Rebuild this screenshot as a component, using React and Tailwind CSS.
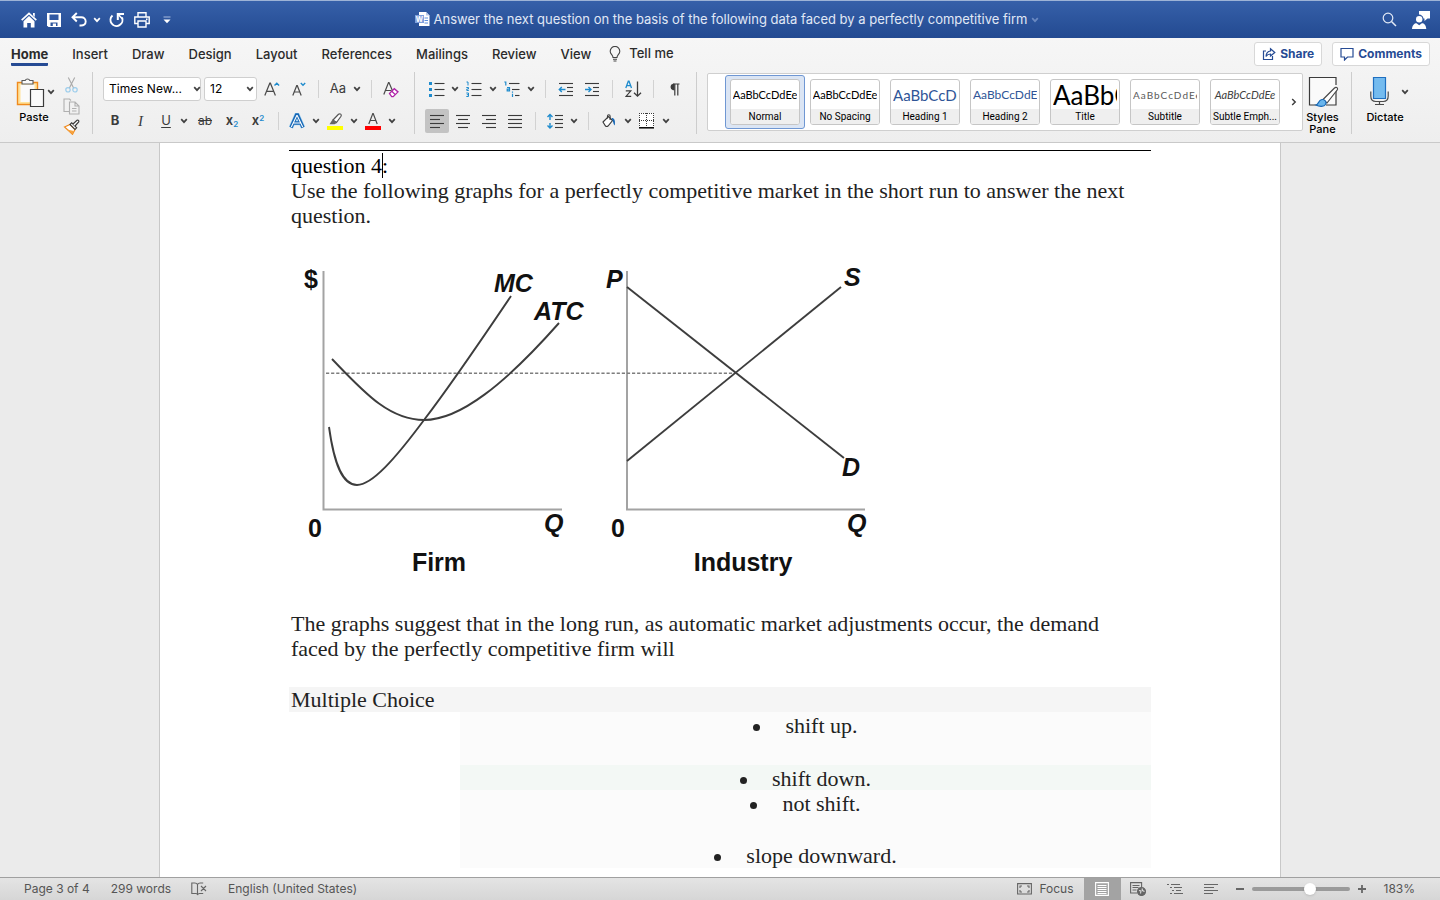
import React from 'react';

const TABS = ['Home', 'Insert', 'Draw', 'Design', 'Layout', 'References', 'Mailings', 'Review', 'View'];

const STYLES = [
  { name: 'Normal', preview: 'text-[11px] text-black', center: true },
  { name: 'No Spacing', preview: 'text-[11px] text-black', center: true },
  { name: 'Heading 1', preview: 'text-[15px] text-[#2f5597]' },
  { name: 'Heading 2', preview: 'text-[12px] text-[#2f5597]' },
  { name: 'Title', preview: 'text-[26px] text-black' },
  { name: 'Subtitle', preview: 'text-[10px] tracking-widest text-[#5a5a5a]' },
  { name: 'Subtle Emph...', preview: 'text-[11px] italic text-[#404040]', center: true },
];

const CHOICES = [
  { text: 'shift up.', row: 'h-[53px]' },
  { text: 'shift down.', row: 'h-[25px] bg-[#f3f8f5]' },
  { text: 'not shift.', row: 'h-[52px]' },
  { text: 'slope downward.', row: 'h-[26px]' },
];

const Chevron = ({ className = 'text-[#404040]' }) => (
  <svg width="8" height="6" viewBox="0 0 8 6" fill="none" className={className}>
    <path d="M1.2 1.2 4 4.2 6.8 1.2" stroke="currentColor" strokeWidth="1.7" />
  </svg>
);

const Tool = ({ label, w = 'w-6', h = 'h-6', className = '', children }) => (
  <button
    type="button"
    aria-label={label}
    className={`flex shrink-0 items-center justify-center ${h} ${w} ${className}`}
  >
    {children}
  </button>
);

const More = ({ label }) => (
  <Tool label={label} w="w-3">
    <Chevron />
  </Tool>
);

const Sep = ({ w = 'w-3' }) => (
  <div className={`flex shrink-0 justify-center ${w}`}>
    <div className="h-[18px] w-px bg-[#d2d2d2]" />
  </div>
);

const GroupLine = () => <div className="h-[62px] w-px shrink-0 bg-[#cdcdcd]" />;

const Picker = ({ label, value, w }) => (
  <div className="relative">
    <select
      aria-label={label}
      className={`block h-6 appearance-none rounded-[3px] border border-[#cfcfcf] bg-white pl-[5px] text-[12px] text-black ${w}`}
    >
      <option>{value}</option>
    </select>
    <span className="pointer-events-none absolute inset-y-0 right-[3px] flex items-center">
      <Chevron />
    </span>
  </div>
);

// Horizontal strokes used by the list and alignment icons: [x1, x2, y]
const Lines = ({ rows, children, w = 16, h = 16 }) => (
  <svg width={w} height={h} viewBox={`0 0 ${w} ${h}`} fill="none">
    {rows.map(([x1, x2, y]) => (
      <path key={y} d={`M${x1} ${y}H${x2}`} stroke="#3b3b3b" strokeWidth="1.1" />
    ))}
    {children}
  </svg>
);

const TitleBar = () => (
  <header className="flex h-[38px] shrink-0 items-center border-t border-[#9db3d6] bg-gradient-to-b from-[#3660a9] to-[#234a91] text-white">
    <div className="flex flex-1 items-center pl-[17px]">
      <Tool label="Home">
        <svg width="16" height="16" viewBox="0 0 16 16" fill="none">
          <path d="M.7 8.2 8 1.3l7.3 6.9" stroke="#fff" strokeWidth="1.7" />
          <path d="M12 1h1.800v4L12 3.3z" fill="#fff" />
          <path d="M2.500 9.200 8 4l5.500 5.200V15.500H9.800V11H6.200v4.500H2.500z" fill="#fff" />
        </svg>
      </Tool>
      <Tool label="Save" w="w-[26px]">
        <svg width="14" height="14" viewBox="0 0 14 14" fill="none">
          <path d="M0 0h14v14H1.500L0 12.500z" fill="#fff" />
          <path d="M2.500 1.500h9v5.500h-9z" fill="#3059a3" />
          <path d="M3.500 9.500h7V13h-7z" fill="#2c559d" />
          <path d="M5.800 10.500H9V13H5.800z" fill="#fff" />
        </svg>
      </Tool>
      <Tool label="Undo">
        <svg width="16" height="15" viewBox="0 0 16 15" fill="none">
          <path d="M5.800 1 1.500 5.200l4.300 4.300M2 5.200h8.200c2.600 0 4.500 1.800 4.500 4.300S12.800 13.500 10 13.500H8.500" stroke="#fff" strokeWidth="1.900" />
        </svg>
      </Tool>
      <Tool label="Undo history" w="w-3">
        <Chevron className="text-white" />
      </Tool>
      <Tool label="Redo" w="w-7">
        <svg width="16" height="16" viewBox="0 0 16 16" fill="none">
          <path d="M3.500 3.500A6 6 0 1 0 13 5.500" stroke="#fff" strokeWidth="2" />
          <path d="M8.800 8V2H15" stroke="#fff" strokeWidth="2" />
          <path d="M9 2.200 13 6.500" stroke="#fff" strokeWidth="1.500" />
        </svg>
      </Tool>
      <Tool label="Print" w="w-[22px]">
        <svg width="16" height="16" viewBox="0 0 16 16" fill="none" stroke="#fff" strokeWidth="1.400">
          <path d="M4 5V.8h8V5M4 11.500H.8V5h14.400v6.500H12" />
          <path d="M4 9h8v6H4z" />
          <path d="M12 7.200h1.500" />
        </svg>
      </Tool>
      <Tool label="Customize toolbar" w="w-7">
        <svg width="8" height="8" viewBox="0 0 8 8">
          <path d="M.5 1h7" stroke="#a9bcdf" />
          <path d="M.5 3.500h7L4 7.200z" fill="#fff" />
        </svg>
      </Tool>
    </div>

    <div className="flex items-center text-[13px] text-[#e0e8f6]">
      <svg width="15" height="15" viewBox="0 0 15 15" className="mr-1">
        <path d="M4 0h7l3.500 3.500V14H4z" fill="#fff" />
        <path d="M11 0v3.500h3.500" fill="#b9c9e8" />
        <path d="M9.500 6h3.500M9.500 8.500h3.500M9.500 11h3.500" stroke="#5b8ede" />
        <path d="M0 3h9v8H0z" fill="#7fa0dc" />
        <text x="4.500" y="9.500" textAnchor="middle" fontSize="7" fontWeight="700" fill="#fff">W</text>
      </svg>
      <h1 className="whitespace-nowrap">
        Answer the next question on the basis of the following data faced by a perfectly competitive firm
      </h1>
      <Chevron className="ml-1 text-[#6b8ac2]" />
    </div>

    <div className="flex flex-1 items-center justify-end pr-[3px]">
      <Tool label="Search" w="w-8">
        <svg width="15" height="15" viewBox="0 0 15 15" fill="none" stroke="#e3eaf6" strokeWidth="1.200">
          <circle cx="6" cy="6" r="4.800" />
          <path d="m9.500 9.500 4.500 4.500" strokeWidth="1.500" />
        </svg>
      </Tool>
      <Tool label="Account" w="w-8">
        <svg width="18" height="18" viewBox="0 0 18 18" fill="#fff">
          <path d="M7 0h11v7.500h-2.500L12.500 10V7.500h-1A5 5 0 0 0 7 3.500z" />
          <circle cx="7.200" cy="8.200" r="3.200" />
          <path d="M0 18c.2-4 2.500-5.800 4.500-5.800l2.700 2 2.700-2c2.200 0 4.200 1.800 4.400 5.800z" />
        </svg>
      </Tool>
    </div>
  </header>
);

const TabBar = () => (
  <nav className="flex h-8 shrink-0 items-center pr-2.5 pl-[11px] text-[13px] font-medium text-[#2b2b2b]">
    <div className="flex flex-1 items-center gap-6">
      {TABS.map((tab, i) => (
        <button
          key={tab}
          type="button"
          className={`h-6 border-y-[3px] border-t-transparent ${
            i === 0 ? 'rounded-[1px] border-b-[#264b94] font-bold' : 'border-b-transparent'
          }`}
        >
          <span className="block leading-[18px]">{tab}</span>
        </button>
      ))}
      <button type="button" className="-ml-1.5 flex items-center gap-2">
        <svg width="12" height="16" viewBox="0 0 12 16" fill="none" stroke="#444" strokeWidth="1.100">
          <path d="M4 11.500C4 9 1.200 8.300 1.200 5.200a4.800 4.800 0 0 1 9.600 0C10.800 8.300 8 9 8 11.500zM4 13.300h4M4.500 15h3" />
        </svg>
        Tell me
      </button>
    </div>
    <div className="flex gap-2.5 text-[12px] font-bold text-[#264b94]">
      <button type="button" className="flex h-6 items-center gap-1 rounded-[3px] border border-[#d8d8d8] bg-white px-[7px]">
        <svg width="14" height="14" viewBox="0 0 14 14" fill="none" stroke="#264b94" strokeWidth="1.200">
          <path d="M4 4H1.500v8.500h9V9" />
          <path d="M8.500 1.800 12.800 5.500 8.500 9V7C6.500 7 5 7.800 4 9.500c.2-3.200 2-5.200 4.500-5.500z" />
        </svg>
        Share
      </button>
      <button type="button" className="flex h-6 items-center gap-1 rounded-[3px] border border-[#d8d8d8] bg-white px-[7px]">
        <svg width="14" height="14" viewBox="0 0 14 14" fill="none" stroke="#264b94" strokeWidth="1.200">
          <path d="M1 1.500h12v8.500H7.500L4.500 13v-3H1z" />
        </svg>
        Comments
      </button>
    </div>
  </nav>
);

const ClipboardGroup = () => (
  <div className="flex w-[92px] shrink-0 pt-1.5 pl-[15px]">
    <div className="w-[42px]">
      <div className="flex items-center">
        <button type="button" aria-label="Paste" className="shrink-0">
          <svg width="30" height="32" viewBox="0 0 30 32" fill="none">
            <path d="M2.500 6.500h20V28.500h-20z" fill="#ffe29a" stroke="#f08a1d" strokeWidth="1.400" />
            <path d="M5.500 8.500h14v17.500h-14z" fill="#fafafa" />
            <path d="M7 8V4.500h3.200a2.500 2.500 0 0 1 4.600 0H18V8z" fill="#fafafa" stroke="#5a5a5a" strokeWidth="1.100" />
            <path d="M15.500 13.500h13v17h-13z" fill="#fafafa" stroke="#3b3b3b" strokeWidth="1.200" />
          </svg>
        </button>
        <More label="Paste options" />
      </div>
      <span className="mt-0.5 block w-[38px] text-center text-[11px] leading-[14px] font-medium text-black">Paste</span>
    </div>
    <div className="flex flex-col items-center pl-0.5">
      <Tool label="Cut" h="h-[18px]">
        <svg width="13" height="16" viewBox="0 0 13 16" fill="none">
          <path d="M3.300.500 8.600 11M9.700.500 4.400 11" stroke="#a9a9a9" strokeWidth="1.100" />
          <circle cx="3" cy="12.800" r="2.200" stroke="#9ccdec" strokeWidth="1.200" />
          <circle cx="10" cy="12.800" r="2.200" stroke="#9ccdec" strokeWidth="1.200" />
        </svg>
      </Tool>
      <Tool label="Copy">
        <svg width="17" height="17" viewBox="0 0 17 17" fill="none" stroke="#b0b0b0" strokeWidth="1.100">
          <path d="M6.500 13.500H1V1h5.500L8 2.500" />
          <path d="M6.500 4h5.500L16 8v8H6.500zM12 4v4h4M9 10.500h4.500M9 13h4.500" />
        </svg>
      </Tool>
      <Tool label="Format painter" h="h-[18px]">
        <svg width="17" height="16" viewBox="0 0 17 16" fill="none">
          <path d="M1.500 8 7 5.500l5 5-2.500 4.800z" fill="#fff" stroke="#f08a1d" strokeWidth="1.200" />
          <path d="M4 10.500 11 12l-1.500 3.300z" fill="#f7a440" />
          <path d="m7 5.500 1.700-1.700 5 5L12 10.500z" fill="#fff" stroke="#3b3b3b" strokeWidth="1.100" />
          <path d="M10 5 14 1.200c1.300-.5 2.200.5 1.700 1.700L12 7" fill="#fff" stroke="#3b3b3b" strokeWidth="1.200" />
        </svg>
      </Tool>
    </div>
  </div>
);

const FontGroup = () => (
  <div className="mr-[19px] ml-2.5 w-[292px] shrink-0 pt-[7px] text-[#3b3b3b]">
    <div className="flex h-6 items-center">
      <Picker label="Font" value="Times New..." w="mr-[3px] w-[98px]" />
      <Picker label="Font size" value="12" w="w-[53px]" />
      <Tool label="Increase font size" w="w-[30px]">
        <svg width="16" height="16" viewBox="0 0 16 16" fill="none">
          <path d="M.8 14.500 5.800 2.200h.6l5 12.300M2.600 10.300h7" stroke="#4a4a4a" strokeWidth="1.200" />
          <path d="m10.500 4.500 2.300-2.300 2.300 2.300" stroke="#1e8bcd" strokeWidth="1.400" />
        </svg>
      </Tool>
      <Tool label="Decrease font size">
        <svg width="14" height="16" viewBox="0 0 14 16" fill="none">
          <path d="M.8 14.500 4.700 4.700h.6l3.900 9.800M2.200 11h5.600" stroke="#4a4a4a" strokeWidth="1.200" />
          <path d="m8.800 2 2.200 2.200L13.200 2" stroke="#1e8bcd" strokeWidth="1.400" />
        </svg>
      </Tool>
      <Sep w="w-3.5" />
      <Tool label="Change case" w="w-[26px]" className="text-[13px]">Aa</Tool>
      <More label="Case options" />
      <Sep w="w-4" />
      <Tool label="Clear formatting">
        <svg width="16" height="17" viewBox="0 0 16 17" fill="none">
          <path d="M.8 13.500 5.500 1.500H6l4 9.500M2.300 9.500h6" stroke="#4a4a4a" strokeWidth="1.200" />
          <path d="m6.500 12.500 4.800-4.800 3.700 3.200-4.800 4.800h-1.500z" fill="#fff" stroke="#b022a8" strokeWidth="1.300" />
          <path d="m8.800 10.300 3.500 3.300" stroke="#b022a8" strokeWidth="1.300" />
        </svg>
      </Tool>
    </div>

    <div className="mt-2 flex h-6 items-center">
      <Tool label="Bold" className="text-[13px] font-bold">B</Tool>
      <Tool label="Italic" w="w-[27px]" className="font-['Liberation_Serif',serif] text-[15px] italic">I</Tool>
      <Tool label="Underline" className="text-[13px] underline underline-offset-2">U</Tool>
      <More label="Underline options" />
      <Tool label="Strikethrough" w="w-[30px]" className="text-[12px] line-through">ab</Tool>
      <Tool label="Subscript" className="text-[13px] font-semibold">
        <span>x<sub className="text-[8px] text-[#1e8bcd]">2</sub></span>
      </Tool>
      <Tool label="Superscript" w="w-7" className="text-[13px] font-semibold">
        <span>x<sup className="text-[8px] text-[#1e8bcd]">2</sup></span>
      </Tool>
      <Sep />
      <Tool label="Text effects" w="w-[26px]">
        <svg width="16" height="16" viewBox="0 0 16 16" fill="none">
          <path d="M2 14.500 7.500 2h1L14 14.500M4.500 10h7" stroke="#a5d5f5" strokeWidth="4.600" />
          <path d="M2 14.500 7.500 2h1L14 14.500M4.500 10h7" stroke="#1767b5" strokeWidth="3.400" />
          <path d="M2.300 14 7.800 2.500h.4L13.700 14M4.500 10h7" stroke="#fff" strokeWidth="1.100" />
        </svg>
      </Tool>
      <More label="Text effect options" />
      <Tool label="Highlight" w="w-[26px]">
        <svg width="16" height="18" viewBox="0 0 16 18" fill="none">
          <path d="m6 8 5.500-5.700c1.500-1.300 3.500.2 2.500 2L9.500 10.500z" fill="#fff" stroke="#555" strokeWidth="1.200" />
          <path d="m5.500 7.500 4.300 3.500-2.300 1.200H2.500z" fill="#666" />
          <path d="M0 14h16v4H0z" fill="#ffff00" />
        </svg>
      </Tool>
      <More label="Highlight colors" />
      <Tool label="Font color" w="w-[26px]">
        <svg width="16" height="18" viewBox="0 0 16 18" fill="none">
          <path d="M3.800 12 7.800 1.500h.4L12.200 12M5.300 8.500h5.400" stroke="#4a4a4a" strokeWidth="1.200" />
          <path d="M0 14h16v4H0z" fill="#ff0000" />
        </svg>
      </Tool>
      <More label="Font colors" />
    </div>
  </div>
);

const ParagraphGroup = () => (
  <div className="mr-1.5 ml-2.5 w-[265px] shrink-0 pt-[7px] text-[#3b3b3b]">
    <div className="flex h-6 items-center">
      <Tool label="Bullets">
        <Lines rows={[[5.5, 15.5, 2.5], [5.5, 15.5, 8.5], [5.5, 15.5, 14.5]]}>
          <path d="M0 1h3v3H0zM0 7h3v3H0zM0 13h3v3H0z" fill="#1e8bcd" />
        </Lines>
      </Tool>
      <More label="Bullet options" />
      <Tool label="Numbering" w="w-[26px]">
        <Lines rows={[[5.5, 15.5, 2.5], [5.5, 15.5, 8.5], [5.5, 15.5, 14.5]]}>
          <g stroke="#1e8bcd" strokeWidth="1">
            <path d="M.5 1h1.500v3.500" />
            <path d="M.3 6.500h2.200v1.500H.8v1.500h2" />
            <path d="M.3 12h2.200v3.500H.3M.8 13.700h1.700" />
          </g>
        </Lines>
      </Tool>
      <More label="Numbering options" />
      <Tool label="Multilevel list" w="w-[26px]">
        <Lines rows={[[5, 15.5, 2.5], [8, 15.5, 8.5], [11, 15.5, 14.5]]}>
          <g stroke="#1e8bcd" strokeWidth="1.200">
            <path d="M.3 1h1.500v3.500" />
            <path d="M3 6.500h2.500v3.300H3.200V8.200h2.300" />
            <path d="M8.500 12.700V16M8.500 10.500v1.200" />
          </g>
        </Lines>
      </Tool>
      <More label="Multilevel options" />
      <Sep w="w-4" />
      <Tool label="Decrease indent" w="w-[26px]">
        <Lines rows={[[1, 15, 1.5], [9, 15, 5.5], [9, 15, 9.5], [1, 15, 13.5]]} h={15}>
          <path d="M7.500 7.500h-6M3.800 5 1.300 7.500 3.800 10" stroke="#1e8bcd" strokeWidth="1.400" />
        </Lines>
      </Tool>
      <Tool label="Increase indent" w="w-[26px]">
        <Lines rows={[[1, 15, 1.5], [9, 15, 5.5], [9, 15, 9.5], [1, 15, 13.5]]} h={15}>
          <path d="M1 7.500h6M4.500 5 7 7.500 4.500 10" stroke="#1e8bcd" strokeWidth="1.400" />
        </Lines>
      </Tool>
      <Sep w="w-3.5" />
      <Tool label="Sort" w="w-7">
        <svg width="17" height="18" viewBox="0 0 17 18" fill="none">
          <path d="M.8 8 3.300 1.200h.7L6.500 8M1.700 5.700h4" stroke="#1e8bcd" strokeWidth="1.300" />
          <path d="M.8 10.800h5L1 16.400h5.200" stroke="#3b3b3b" strokeWidth="1.200" />
          <path d="M12.500 1.500V16M9 12.700l3.500 3.500 3.500-3.500" stroke="#3b3b3b" strokeWidth="1.300" />
        </svg>
      </Tool>
      <Sep />
      <Tool label="Show formatting marks" w="w-[30px]">
        <svg width="11" height="13" viewBox="0 0 11 13" fill="none">
          <path d="M5.500 7.200H4A3.300 3.300 0 0 1 4 .8h1.500z" fill="#3b3b3b" />
          <path d="M4 1h6.500M5.800 1v11.500M8.800 1v11.500" stroke="#3b3b3b" strokeWidth="1.200" />
        </svg>
      </Tool>
    </div>

    <div className="mt-2 flex h-6 items-center">
      <Tool label="Align left" className="rounded-[2px] bg-[#c3c3c3]">
        <Lines rows={[[1, 15, 2.5], [1, 11, 6.5], [1, 15, 10.5], [1, 11, 14.5]]} />
      </Tool>
      <Tool label="Center" w="w-7">
        <Lines rows={[[1, 15, 2.5], [3, 13, 6.5], [1, 15, 10.5], [3, 13, 14.5]]} />
      </Tool>
      <Tool label="Align right">
        <Lines rows={[[1, 15, 2.5], [5, 15, 6.5], [1, 15, 10.5], [5, 15, 14.5]]} />
      </Tool>
      <Tool label="Justify" w="w-7">
        <Lines rows={[[1, 15, 2.5], [1, 15, 6.5], [1, 15, 10.5], [1, 15, 14.5]]} />
      </Tool>
      <Sep />
      <Tool label="Line spacing" w="w-[27px]">
        <Lines rows={[[8, 16, 2.5], [8, 16, 6.5], [8, 16, 10.5], [8, 16, 14.5]]}>
          <path d="M3 2v5M.5 4 3 1.500 5.500 4M3 10v5M.5 12.500 3 15l2.500-2.500" stroke="#1e8bcd" strokeWidth="1.400" />
        </Lines>
      </Tool>
      <More label="Spacing options" />
      <Sep w="w-4" />
      <Tool label="Shading" w="w-[26px]">
        <svg width="14" height="14" viewBox="0 0 14 14" fill="none">
          <path d="M1 8 6.500 2.500l4 4-4.500 5.500c-1 .8-1.800.5-2.500 0z" fill="#fff" stroke="#3b3b3b" strokeWidth="1.100" />
          <path d="M5.500 4.500V2a1.300 1.300 0 0 1 2.600 0v4" stroke="#3b3b3b" strokeWidth="1.100" />
          <path d="M9.500 4c3 0 4 2.500 3.300 7.500-1.500-1-1.300-3-2-4.500z" fill="#1767b5" />
        </svg>
      </Tool>
      <More label="Shading colors" />
      <Tool label="Borders" w="w-[26px]">
        <svg width="16" height="16" viewBox="0 0 16 16" fill="none">
          <path d="M0 0h15v14H0z" fill="#fff" />
          <path d="M0 .5h15M0 7.500h15M.5 0v14M7.500 0v14M14.500 0v14" stroke="#3b3b3b" strokeDasharray="1 1" />
          <path d="M0 14.800h15" stroke="#000" strokeWidth="1.500" />
        </svg>
      </Tool>
      <More label="Border options" />
    </div>
  </div>
);

const StyleGallery = () => (
  <div className="mt-[3px] ml-2.5 flex h-[58px] min-w-0 flex-1 items-center overflow-hidden rounded-[2px] border border-[#cfcfcf] bg-white pl-[17px]">
    {STYLES.map((s, i) => (
      <button
        key={s.name}
        type="button"
        className={`flex h-[54px] w-20 shrink-0 items-center justify-center rounded-[3px] border ${
          i === 0 ? 'border-[#6f97d3] bg-[#dbe5f4]' : 'border-transparent'
        }`}
      >
        <span className="flex h-[46px] w-[70px] flex-col overflow-hidden rounded-[3px] border border-[#c6c6c6] bg-white">
          <span
            className={`mx-0.5 flex h-[30px] items-center overflow-hidden font-[Lato,sans-serif] leading-[30px] ${
              s.center ? 'justify-center' : ''
            } ${s.preview}`}
          >
            AaBbCcDdEe
          </span>
          <span className="flex-1 bg-[#efefef] text-center font-[Roboto,sans-serif] text-[10px] leading-[15px] whitespace-nowrap text-black">
            {s.name}
          </span>
        </span>
      </button>
    ))}
    <button type="button" aria-label="More styles" className="flex flex-1 justify-center">
      <svg width="6" height="8" viewBox="0 0 6 8" fill="none">
        <path d="m1.200 1 3 3-3 3" stroke="#404040" strokeWidth="1.500" />
      </svg>
    </button>
  </div>
);

const Ribbon = () => (
  <div className="flex h-[73px] shrink-0 border-b border-[#c9c9c9]">
    <ClipboardGroup />
    <div className="pt-0.5"><GroupLine /></div>
    <FontGroup />
    <div className="pt-0.5"><GroupLine /></div>
    <ParagraphGroup />
    <div className="pt-0.5"><GroupLine /></div>
    <StyleGallery />
    <button type="button" className="flex w-[39px] shrink-0 flex-col items-center pt-1.5 text-[11px] leading-3 font-medium text-black">
      <svg width="32" height="32" viewBox="0 0 32 32" fill="none">
        <path d="M29 12V29H19M10 29H2.500V1.500H29V9" fill="#fafafa" stroke="#3b3b3b" strokeWidth="1.200" />
        <path d="M16 23.500 27.500 12c1.500-1.300 3.500-.5 3 1.500L20 27z" fill="#fff" stroke="#4a4a4a" strokeWidth="1.200" />
        <path d="M9 29c3-.5 2-5 6-5.500 3-.2 5 2.500 3.500 5-1.500 2.300-6 2.500-9.500.5z" fill="#69b5ec" stroke="#1767b5" strokeWidth="1.200" />
      </svg>
      <span className="mt-[3px]">Styles</span>
      <span>Pane</span>
    </button>
    <div className="pt-0.5 pl-[9px]"><GroupLine /></div>
    <div className="w-[88px] shrink-0 pt-1.5 pl-[13px] text-[11px] font-medium text-black">
      <div className="flex items-center">
        <button type="button" aria-label="Dictate" className="flex w-[30px] justify-center">
          <svg width="20" height="32" viewBox="0 0 20 32" fill="none">
            <path d="M3.500 1.500h12v21h-12z" fill="#74bbef" stroke="#1f6fc0" strokeWidth="1.200" />
            <path d="M.8 15.500V20c0 3.500 2 5.500 5 5.500h7.400c3 0 5-2 5-5.500v-4.500M9.500 25.500v3M5 28.500h9" stroke="#4a4a4a" strokeWidth="1.200" />
          </svg>
        </button>
        <span className="pl-1"><More label="Dictate options" /></span>
      </div>
      <span className="mt-0.5 block w-10 text-center leading-[14px]">Dictate</span>
    </div>
  </div>
);

const Graphs = () => (
  <svg width="600" height="383" viewBox="289 228 600 383" fill="none" className="block">
    <g stroke="#a3a3a3" strokeWidth="2">
      <path d="M323.500 271V509.500H562" />
      <path d="M627 271V509.500H865" />
    </g>
    <path d="M326 373.300H735" stroke="#7d7d7d" strokeWidth="1.400" strokeDasharray="3.200 1.900" />
    <g stroke="#3d3d3d" strokeWidth="1.900">
      <path d="M329 427C334 463 342 485 357 485c15 0 38-26 67-65 26-34 56-78 87-124" />
      <path d="M332 359c30 31 56 61 92 61 36 0 81-36 135-97" />
      <path d="M627 287 844 458" />
      <path d="M627 461 841 287" />
    </g>
    <g fill="#111" fontFamily="Liberation Sans, Arial, sans-serif" fontSize="25" fontWeight="700">
      <text x="304" y="288">$</text>
      <text x="308" y="537">0</text>
      <text x="611" y="537">0</text>
      <text x="439" y="571" textAnchor="middle">Firm</text>
      <text x="743" y="571" textAnchor="middle">Industry</text>
      <g fontStyle="italic">
        <text x="494" y="292">MC</text>
        <text x="534" y="320">ATC</text>
        <text x="606" y="288">P</text>
        <text x="844" y="286">S</text>
        <text x="842" y="476">D</text>
        <text x="544" y="532">Q</text>
        <text x="847" y="532">Q</text>
      </g>
    </g>
  </svg>
);

const Document = () => (
  <main className="min-h-0 flex-1 overflow-hidden bg-[#ebebeb]">
    <article className="mx-auto h-full max-w-[1122px] border-x border-[#c8c8c8] bg-white px-[129px] pt-[7px] font-['Liberation_Serif',serif] text-[22px] leading-[25px] text-[#222]">
      <div className="border-t border-black pt-0.5">
        <p className="pl-0.5 text-black">
          question 4<span className="absolute h-[25px] w-px bg-black" />:
        </p>
        <p className="pl-0.5">
          Use the following graphs for a perfectly competitive market in the short run to answer the next question.
        </p>
      </div>
      <Graphs />
      <p className="pl-0.5">
        The graphs suggest that in the long run, as automatic market adjustments occur, the demand faced by the
        perfectly competitive firm will
      </p>
      <h2 className="mt-[26px] bg-[#f5f5f5] pl-0.5">Multiple Choice</h2>
      <ul className="ml-[171px] bg-[#fbfbfb] leading-[27px]">
        {CHOICES.map((choice) => (
          <li key={choice.text} className={`flex items-start justify-center gap-[25px] ${choice.row}`}>
            <span className="mt-3 size-[7px] rounded-full bg-[#222]" />
            {choice.text}
          </li>
        ))}
      </ul>
    </article>
  </main>
);

const StatusBar = () => (
  <footer className="flex h-[23px] shrink-0 items-center border-t border-[#a0a0a0] bg-gradient-to-b from-[#e4e4e4] to-[#d6d6d6] pr-[25px] pl-6 text-[12px] text-[#555]">
    <span className="mr-[21px]">Page 3 of 4</span>
    <span className="mr-5">299 words</span>
    <button type="button" aria-label="Proofing" className="mr-[21px]">
      <svg width="16" height="14" viewBox="0 0 16 14" fill="none" stroke="#666" strokeWidth="1.100">
        <path d="M6.500 13V2.500C6 1.500 5 1 3.800 1H.8v10.500H5c1 0 1.500.5 1.500 1.500.3-1 .8-1.500 2-1.500h3.700M6.500 2.500C7 1.500 8 1 9.200 1h3M10 4l5 5M15 4l-5 5" />
      </svg>
    </button>
    <span>English (United States)</span>

    <div className="ml-auto flex h-full items-center">
      <button type="button" className="mr-2.5 flex items-center gap-[7px]">
        <svg width="15" height="12" viewBox="0 0 15 12" fill="none" stroke="#666" strokeWidth="1.100">
          <path d="M.6.600h13.800v10.400H.6z" />
          <path d="M3 5V3h2M10 3h2v2M12 7v2h-2M5 9H3V7" />
        </svg>
        Focus
      </button>
      <button type="button" aria-label="Print layout" className="flex h-full w-[37px] items-center justify-center bg-[#a3a3a3]">
        <svg width="14" height="14" viewBox="0 0 14 14" fill="none" stroke="#fff" strokeWidth="1.100">
          <path d="M.6.600h12.800v12.800H.6zM2.500 3.500h9M2.500 5.500h9M2.500 7.500h9M2.500 9.500h9M2.500 11.500h9" />
        </svg>
      </button>
      <button type="button" aria-label="Web layout" className="flex w-[35px] justify-center">
        <svg width="16" height="14" viewBox="0 0 16 14" fill="none" stroke="#666" strokeWidth="1.100">
          <path d="M7 11H.6V.600h11V5M2.500 3.500h7M2.500 5.500h6M2.500 8h4" />
          <circle cx="11.500" cy="9.500" r="4" fill="#666" />
          <path d="M9 8.500 11 9l-.5 2.500M12 6.500l.5 2 2 1" stroke="#ddd" />
        </svg>
      </button>
      <button type="button" aria-label="Outline" className="flex w-[38px] justify-center">
        <svg width="16" height="11" viewBox="0 0 16 11" fill="none" stroke="#666" strokeWidth="1.200">
          <path d="M0 .5h2M4 .5h9M3 3.500h2M7 3.500h8M5 6.500h2M9 6.500h5M3 9.500h2M7 9.500h9" />
        </svg>
      </button>
      <button type="button" aria-label="Draft" className="flex w-[34px] justify-center">
        <svg width="14" height="11" viewBox="0 0 14 11" fill="none" stroke="#666" strokeWidth="1.200">
          <path d="M0 .5h14M0 3.500h10M0 6.500h14M0 9.500h9" />
        </svg>
      </button>
      <button type="button" aria-label="Zoom out" className="mx-2">
        <span className="block h-0.5 w-2 bg-[#666]" />
      </button>
      <input
        type="range"
        aria-label="Zoom"
        min="0"
        max="100"
        defaultValue="61"
        className="h-1 w-[98px] appearance-none rounded-full bg-[#9a9a9a] [&::-webkit-slider-thumb]:size-3 [&::-webkit-slider-thumb]:appearance-none [&::-webkit-slider-thumb]:rounded-full [&::-webkit-slider-thumb]:bg-white [&::-webkit-slider-thumb]:shadow"
      />
      <button type="button" aria-label="Zoom in" className="mx-2">
        <svg width="8" height="8" viewBox="0 0 8 8" stroke="#666" strokeWidth="1.800">
          <path d="M0 4h8M4 0v8" />
        </svg>
      </button>
      <span className="ml-2.5">183%</span>
    </div>
  </footer>
);

export default function App() {
  return (
    <div className="flex h-screen flex-col overflow-hidden font-[Inter,sans-serif]">
      <TitleBar />
      <div className="shrink-0 bg-gradient-to-b from-[#f6f6f6] to-[#eeeeee]">
        <TabBar />
        <Ribbon />
      </div>
      <Document />
      <StatusBar />
    </div>
  );
}
